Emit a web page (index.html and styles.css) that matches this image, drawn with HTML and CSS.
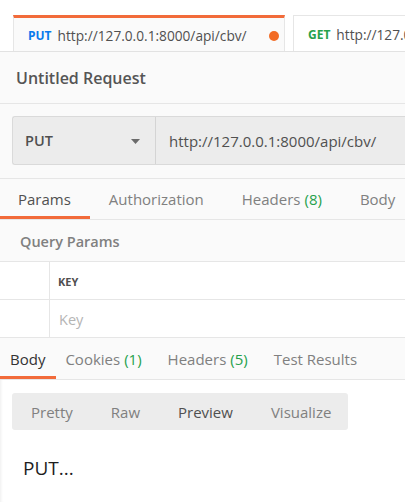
FILE: index.html
```html
<!DOCTYPE html>
<html>
<head>
<meta charset="utf-8">
<link rel="stylesheet" href="styles.css">
</head>
<body>
<div class="app">
  <div class="tabbar">
    <div class="tab active">
      <span class="m put">PUT</span>
      <span class="turl">http://127.0.0.1:8000/api/cbv/</span>
      <span class="dot"></span>
    </div>
    <div class="tab">
      <span class="m get">GET</span>
      <span class="turl">http://127.0.0.1:8000/api/cbv/</span>
    </div>
  </div>
  <div class="reqname">Untitled Request</div>
  <div class="urlrow">
    <div class="urlbox">
      <div class="method">
        <span>PUT</span>
        <svg class="caret" width="9" height="5" viewBox="0 0 9 5"><path d="M0 0H9L4.5 5Z" fill="#6b6b6b"/></svg>
      </div>
      <div class="urltext">http://127.0.0.1:8000/api/cbv/</div>
    </div>
  </div>
  <div class="reqtabs">
    <div class="rt on">Params</div>
    <div class="rt">Authorization</div>
    <div class="rt">Headers <span class="cnt">(8)</span></div>
    <div class="rt">Body</div>
  </div>
  <div class="qp">Query Params</div>
  <div class="table">
    <div class="trow head"><div class="cell0"></div><div class="cell">KEY</div></div>
    <div class="trow"><div class="cell0"></div><div class="cell ph">Key</div></div>
  </div>
  <div class="restabs">
    <div class="st on">Body</div>
    <div class="st ck">Cookies <span class="cnt">(1)</span></div>
    <div class="st">Headers <span class="cnt">(5)</span></div>
    <div class="st">Test Results</div>
  </div>
  <div class="resbody">
    <div class="seg">
      <div class="sg">Pretty</div>
      <div class="sg">Raw</div>
      <div class="sg on">Preview</div>
      <div class="sg">Visualize</div>
    </div>
    <div class="preview">PUT...</div>
  </div>
</div>
</body>
</html>
```
FILE: styles.css
```css
html, body {
  margin: 0;
  padding: 0;
}
body {
  width: 405px;
  height: 502px;
  overflow: hidden;
  background: #fff;
  font-family: "Open Sans", "Liberation Sans", sans-serif;
  color: #505050;
}
.app {
  position: relative;
  width: 405px;
  height: 502px;
  overflow: hidden;
  box-shadow: inset 3px 0 3px -2px rgba(0,0,0,0.07);
}
.tabbar {
  height: 52px;
  padding: 15px 0 0 13px;
  box-sizing: border-box;
  border-bottom: 1px solid #e2e2e2;
  display: flex;
  gap: 8px;
  background: #fff;
  overflow: hidden;
}
.tab {
  flex: none;
  height: 38px;
  box-sizing: border-box;
  border: 1px solid #e6e6e6;
  border-bottom: none;
  background: #fff;
  display: flex;
  align-items: center;
  padding: 0 0 0 14px;
  white-space: nowrap;
}
.tab.active {
  width: 272px;
  background: #fafafa;
  border-top: 3px solid #f26b3a;
  height: 38px;
}
.m {
  font-size: 12px;
  font-weight: 700;
  margin-right: 6px;
}
.put { color: #097bed; }
.get { color: #26a14c; }
.turl {
  font-size: 13.7px;
  color: #505050;
}
.dot {
  width: 10px;
  height: 10px;
  border-radius: 50%;
  background: #f26b24;
  margin-left: 22px;
}
.reqname {
  height: 51px;
  background: #fafafa;
  border-bottom: 1px solid #e6e6e6;
  padding-left: 16px;
  display: flex;
  align-items: center;
  font-size: 16px;
  font-weight: 600;
  color: #555;
}
.urlrow {
  height: 75px;
  background: #fafafa;
  border-bottom: 1px solid #e6e6e6;
  padding: 12px 0 0 12px;
  box-sizing: border-box;
}
.urlbox {
  height: 49px;
  box-sizing: border-box;
  border: 1px solid #dadada;
  border-right: none;
  border-radius: 3px 0 0 3px;
  background: #ececec;
  display: flex;
  align-items: center;
}
.method {
  width: 143px;
  height: 100%;
  box-sizing: border-box;
  border-right: 1px solid #d4d4d4;
  display: flex;
  align-items: center;
  justify-content: space-between;
  padding: 0 15px 0 12px;
  font-size: 14.5px;
  font-weight: 600;
  color: #505050;
}
.caret { margin-top: 1px; }
.urltext {
  padding-left: 13px;
  font-size: 15px;
  color: #505050;
  white-space: nowrap;
}
.reqtabs {
  height: 41px;
  box-sizing: border-box;
  background: #fafafa;
  border-bottom: 1px solid #e6e6e6;
  display: flex;
  white-space: nowrap;
}
.rt {
  font-size: 15px;
  color: #808080;
  padding: 3px 19px 0;
  display: flex;
  align-items: center;
  box-sizing: border-box;
  height: 40px;
  border-bottom: 3px solid transparent;
}
.rt.on {
  color: #505050;
  border-bottom-color: #f26b3a;
  padding-left: 18px;
}
.cnt { color: #26a14c; margin-left: 4px; }
.qp {
  height: 41px;
  background: #fafafa;
  padding: 2px 0 0 20px;
  box-sizing: border-box;
  display: flex;
  align-items: center;
  font-size: 14.5px;
  font-weight: 600;
  color: #808080;
}
.table {
  border-top: 1px solid #e6e6e6;
  background: #fff;
}
.trow {
  display: flex;
  height: 37px;
  border-bottom: 1px solid #e6e6e6;
}
.cell0 {
  width: 49px;
  border-right: 1px solid #e6e6e6;
}
.cell {
  display: flex;
  align-items: center;
  padding: 1px 0 0 8px;
  font-size: 14.5px;
}
.head .cell {
  font-size: 11px;
  font-weight: 700;
  color: #505050;
}
.ph { color: #b5b5b5; padding-left: 9px; }
.restabs {
  height: 42px;
  box-sizing: border-box;
  background: #fafafa;
  border-bottom: 1px solid #e6e6e6;
  display: flex;
  white-space: nowrap;
}
.st {
  font-size: 15px;
  color: #808080;
  display: flex;
  align-items: center;
  box-sizing: border-box;
  height: 41px;
  border-bottom: 3px solid transparent;
  padding: 3px 13px 0;
}
.st.on {
  color: #333;
  border-bottom-color: #f26b3a;
  padding: 3px 11px 0 10px;
}
.st.ck { padding-left: 9px; }
.resbody {
  padding: 13px 0 0 12px;
}
.seg {
  width: 336px;
  height: 37px;
  background: #ececec;
  border-radius: 3px;
  display: flex;
  align-items: center;
}
.sg {
  font-size: 15px;
  color: #808080;
  padding: 0 19px;
}
.sg.on { color: #505050; }
.preview {
  margin: 25px 0 0 11px;
  font-size: 19px;
  color: #1e1e1e;
}
```
